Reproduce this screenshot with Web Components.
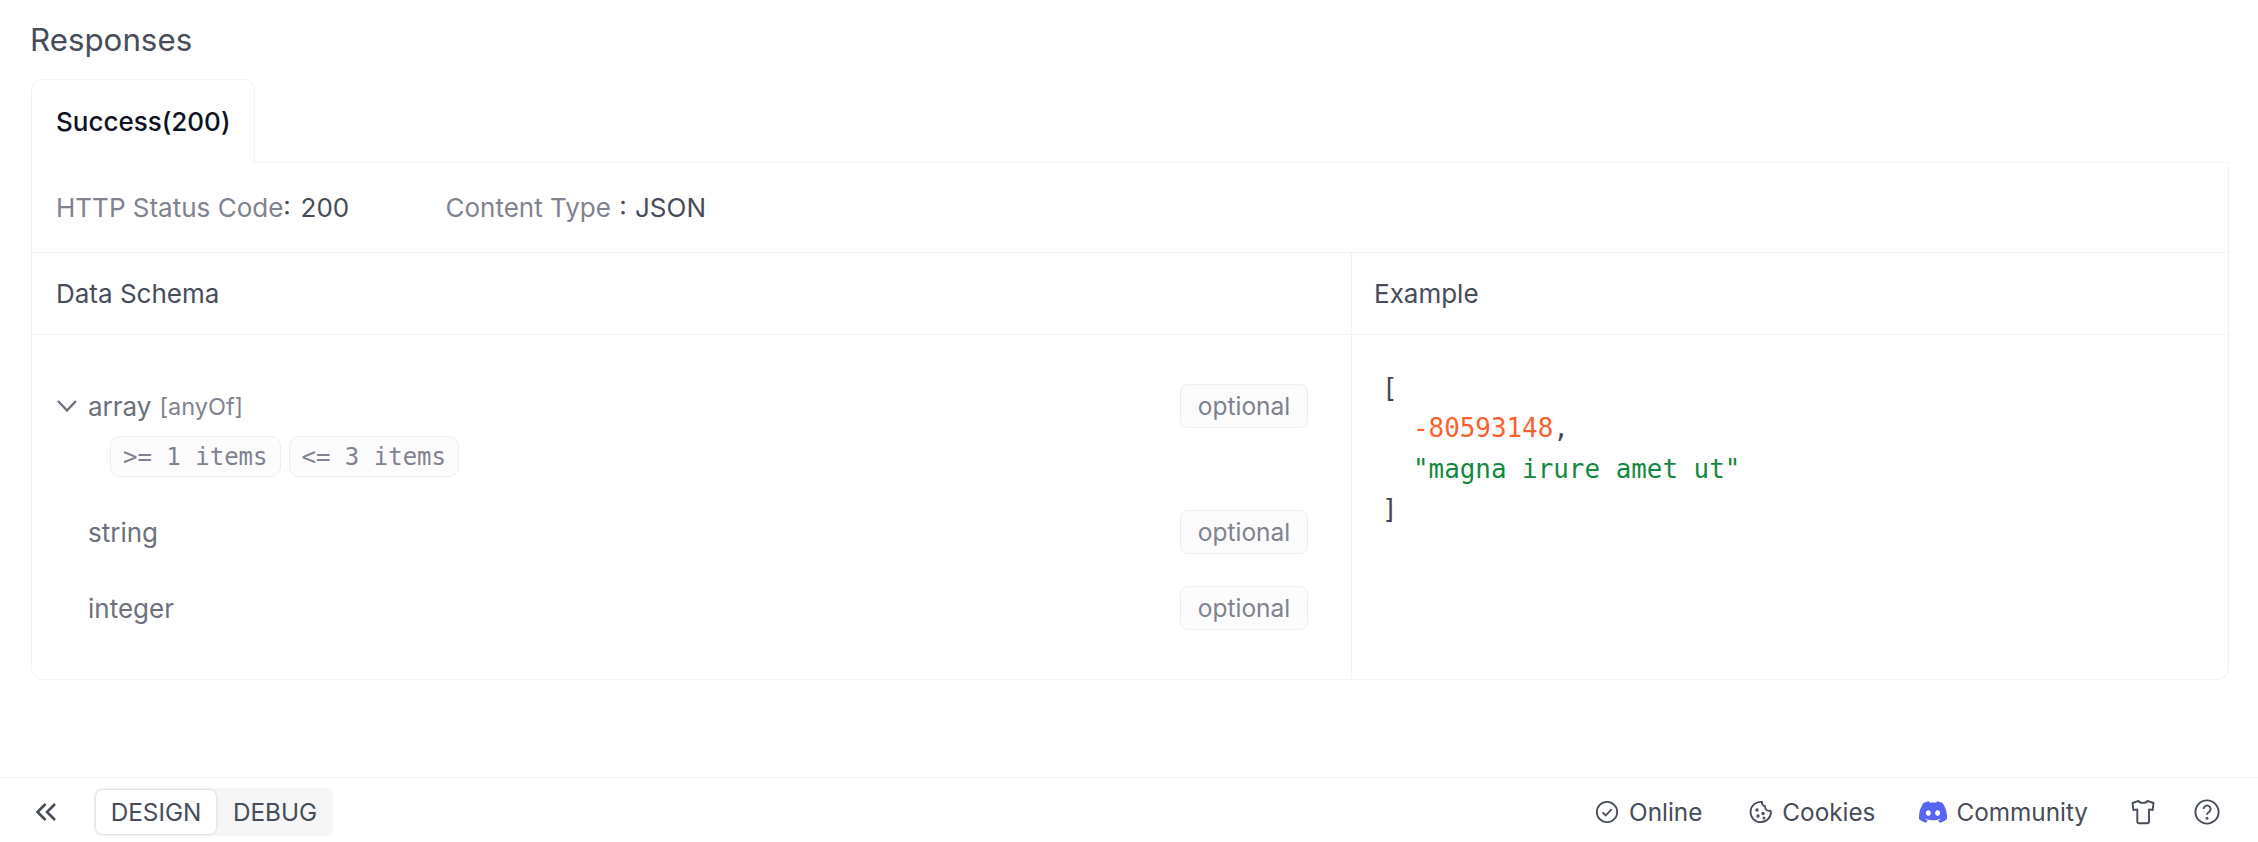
<!DOCTYPE html>
<html>
<head>
<meta charset="utf-8">
<title>Responses</title>
<style>
  html, body { margin: 0; height: 100%; background: #fff; }
  body { font-family: Inter, "Liberation Sans", sans-serif; overflow: hidden; }
</style>
</head>
<body>
<api-page>
  <api-responses title-text="Responses" tab="Success(200)">
    <schema-row slot="schema" name="array" extra="[anyOf]" expandable>
      <mono-tag>&gt;= 1 items</mono-tag>
      <mono-tag>&lt;= 3 items</mono-tag>
    </schema-row>
    <schema-row slot="schema" name="string"></schema-row>
    <schema-row slot="schema" name="integer"></schema-row>
    <json-example slot="example"></json-example>
  </api-responses>
  <status-bar slot="footer"></status-bar>
</api-page>

<script>
class ApiPage extends HTMLElement {
  constructor() {
    super();
    this.attachShadow({ mode: 'open' });
    this.shadowRoot.innerHTML = `
      <style>
        :host { display: flex; flex-direction: column; height: 842px; }
        main { flex: 1; min-height: 0; padding: 0 29px 0 31px; }
      </style>
      <main><slot></slot></main>
      <slot name="footer"></slot>
    `;
  }
}
customElements.define('api-page', ApiPage);

class ApiResponses extends HTMLElement {
  constructor() {
    super();
    this.attachShadow({ mode: 'open' });
  }
  connectedCallback() {
    const line = '1.5px solid #f3f3f7';
    this.shadowRoot.innerHTML = `
      <style>
        :host { display: block; color: #464c58; }
        h2 { margin: 0 0 0 -1px; height: 79px; box-sizing: border-box; padding-top: 21px; font-size: 31.3px; line-height: 38px; font-weight: 400; }
        .tabs { display: flex; height: 84px; }
        .tab {
          width: 224px; box-sizing: border-box; padding-left: 24px;
          display: flex; align-items: center;
          font-size: 26px; font-weight: 500; color: #0d1322;
          border: ${line}; border-bottom: 0; border-radius: 12px 12px 0 0;
        }
        .fill { flex: 1; border-bottom: ${line}; }
        .card { border: ${line}; border-top: 0; border-radius: 0 0 12px 12px; height: 516px; display: flex; flex-direction: column; }
        .status { height: 90px; flex: none; box-sizing: border-box; padding-left: 24px; display: flex; align-items: center; font-size: 26px; border-bottom: ${line}; }
        .status span { color: #80838f; }
        .status b { font-weight: 400; color: #464c58; white-space: pre; word-spacing: 2.5px; }
        .status div:first-child { width: 389.5px; }
        .status div:last-child b { word-spacing: 1px; }
        .cols { flex: 1; min-height: 0; display: grid; grid-template-columns: 1319px 1fr; }
        .col { display: flex; flex-direction: column; min-width: 0; }
        .col + .col { border-left: ${line}; }
        .head { height: 82px; flex: none; box-sizing: border-box; display: flex; align-items: center; font-size: 26px; border-bottom: ${line}; }
        .left .head { padding-left: 24px; }
        .right .head { padding-left: 22px; }
        .schema { padding: 49px 43px 0 25px; display: flex; flex-direction: column; gap: 32px; }
        .example { padding: 33px 0 0 30px; }
      </style>
      <h2>${this.getAttribute('title-text')}</h2>
      <div class="tabs"><div class="tab">${this.getAttribute('tab')}</div><div class="fill"></div></div>
      <div class="card">
        <div class="status">
          <div><span>HTTP Status Code</span><b>: 200</b></div>
          <div><span>Content Type</span><b> : JSON</b></div>
        </div>
        <div class="cols">
          <div class="col left">
            <div class="head">Data Schema</div>
            <div class="schema"><slot name="schema"></slot></div>
          </div>
          <div class="col right">
            <div class="head">Example</div>
            <div class="example"><slot name="example"></slot></div>
          </div>
        </div>
      </div>
    `;
  }
}
customElements.define('api-responses', ApiResponses);

class SchemaRow extends HTMLElement {
  constructor() {
    super();
    this.attachShadow({ mode: 'open' });
  }
  connectedCallback() {
    const name = this.getAttribute('name');
    const extra = this.getAttribute('extra');
    const chevron = this.hasAttribute('expandable')
      ? `<svg viewBox="0 0 20 12" width="20" height="12" fill="none" stroke="#6c707c" stroke-width="2.3"><path d="M1 1l9 9.5L19 1"/></svg>`
      : '';
    this.shadowRoot.innerHTML = `
      <style>
        :host { display: block; }
        .top { display: flex; align-items: center; height: 44px; }
        .icon { width: 31px; flex: none; display: flex; }
        .name { font-size: 26px; color: #6c707c; }
        .extra { font-size: 23.5px; color: #80838f; margin-left: 8px; }
        .badge {
          margin-left: auto; height: 44px; width: 128px; box-sizing: border-box;
          display: flex; align-items: center; justify-content: center;
          font-size: 24.5px; color: #80838f; background: #fcfcfd;
          border: 1.5px solid #eeeeef; border-radius: 8px;
        }
        .tags { display: flex; gap: 8px; padding: 8px 0 1px 53px; }
      </style>
      <div class="top">
        <div class="icon">${chevron}</div>
        <span class="name">${name}</span>
        ${extra ? `<span class="extra">${extra}</span>` : ''}
        <span class="badge">optional</span>
      </div>
      ${this.children.length ? '<div class="tags"><slot></slot></div>' : ''}
    `;
  }
}
customElements.define('schema-row', SchemaRow);

class MonoTag extends HTMLElement {
  constructor() {
    super();
    this.attachShadow({ mode: 'open' });
    this.shadowRoot.innerHTML = `
      <style>
        :host {
          display: inline-flex; align-items: center; height: 41px; box-sizing: border-box;
          padding: 1px 12px 0; font: 24px "DejaVu Sans Mono", monospace; color: #80838f;
          background: #fcfcfd; border: 1.5px solid #eeeeef; border-radius: 10px;
        }
      </style>
      <slot></slot>
    `;
  }
}
customElements.define('mono-tag', MonoTag);

class JsonExample extends HTMLElement {
  constructor() {
    super();
    this.attachShadow({ mode: 'open' });
    this.shadowRoot.innerHTML = `<style>
        :host { display: block; font: 25.9px/40.4px "DejaVu Sans Mono", monospace; color: #3f4653; }
        .num { color: #ff5f2e; }
        .str { color: #14883e; }
        .in { padding-left: 31px; }
      </style>
      <div>[</div>
      <div class="in"><span class="num">-80593148</span>,</div>
      <div class="in"><span class="str">"magna irure amet ut"</span></div>
      <div>]</div>
    `;
  }
}
customElements.define('json-example', JsonExample);

class StatusBar extends HTMLElement {
  constructor() {
    super();
    this.attachShadow({ mode: 'open' });
    this.shadowRoot.innerHTML = `
      <style>
        :host {
          display: flex; align-items: center; height: 65px; box-sizing: border-box;
          border-top: 1.5px solid #f3f3f5; padding: 4px 38px 0 35px;
          font-size: 24.3px; color: #464c58;
        }
        .back { width: 59px; display: flex; }
        .seg { display: flex; height: 48px; box-sizing: border-box; padding: 2px; width: 239px; background: #f6f6f7; border-radius: 8px; }
        .seg div { display: flex; align-items: center; justify-content: center; }
        .on { width: 120px; background: #fff; border-radius: 7px; box-shadow: 0 0 3px rgba(40,40,70,.22); }
        .off { flex: 1; padding-left: 3px; }
        .right { margin-left: auto; display: flex; align-items: center; }
        .item { display: flex; align-items: center; gap: 9px; }
        svg { display: block; flex: none; }
      </style>
      <div class="back">
        <svg width="22" height="18" viewBox="0 0 22 18" fill="none" stroke="#464c58" stroke-width="2.6"><path d="M10.5 1L2.5 9l8 8"/><path d="M20 1l-8 8 8 8"/></svg>
      </div>
      <div class="seg"><div class="on">DESIGN</div><div class="off">DEBUG</div></div>
      <div class="right">
        <div class="item" style="gap:10px">
          <svg width="24" height="24" viewBox="0 0 24 24" fill="none" stroke="#464c58" stroke-width="1.8"><circle cx="12" cy="12" r="10.2"/><path d="M7.5 12.3l3.2 3.2 6-6.4"/></svg>
          <span>Online</span>
        </div>
        <div class="item" style="margin-left:47px">
          <svg width="24" height="24" viewBox="0 0 24 24" fill="none" stroke="#464c58" stroke-width="1.8"><path d="M13 1.9a3.6 3.6 0 0 0 3 4.3 3.9 3.9 0 0 0 4.6 4.5c.6 0 1 .2 1.3.6A10.2 10.2 0 1 1 13 1.9z"/><circle cx="8" cy="10" r=".8"/><circle cx="14" cy="13.5" r=".8"/><circle cx="9" cy="16" r=".8"/><circle cx="15" cy="18" r=".6"/></svg>
          <span>Cookies</span>
        </div>
        <div class="item" style="margin-left:44px">
          <svg width="28" height="28" viewBox="0 0 24 24" fill="#5865f2"><path d="M20.317 4.3698a19.7913 19.7913 0 00-4.8851-1.5152.0741.0741 0 00-.0785.0371c-.211.3753-.4447.8648-.6083 1.2495-1.8447-.2762-3.68-.2762-5.4868 0-.1636-.3933-.4058-.8742-.6177-1.2495a.077.077 0 00-.0785-.037 19.7363 19.7363 0 00-4.8852 1.515.0699.0699 0 00-.0321.0277C.5334 9.0458-.319 13.5799.0992 18.0578a.0824.0824 0 00.0312.0561c2.0528 1.5076 4.0413 2.4228 5.9929 3.0294a.0777.0777 0 00.0842-.0276c.4616-.6304.8731-1.2952 1.226-1.9942a.076.076 0 00-.0416-.1057c-.6528-.2476-1.2743-.5495-1.8722-.8923a.077.077 0 01-.0076-.1277c.1258-.0943.2517-.1923.3718-.2914a.0743.0743 0 01.0776-.0105c3.9278 1.7933 8.18 1.7933 12.0614 0a.0739.0739 0 01.0785.0095c.1202.099.246.1981.3728.2924a.077.077 0 01-.0066.1276 12.2986 12.2986 0 01-1.873.8914.0766.0766 0 00-.0407.1067c.3604.698.7719 1.3628 1.225 1.9932a.076.076 0 00.0842.0286c1.961-.6067 3.9495-1.5219 6.0023-3.0294a.077.077 0 00.0313-.0552c.5004-5.177-.8382-9.6739-3.5485-13.6604a.061.061 0 00-.0312-.0286zM8.02 15.3312c-1.1825 0-2.1569-1.0857-2.1569-2.419 0-1.3332.9555-2.4189 2.157-2.4189 1.2108 0 2.1757 1.0952 2.1568 2.419 0 1.3332-.9555 2.4189-2.1569 2.4189zm7.9748 0c-1.1825 0-2.1569-1.0857-2.1569-2.419 0-1.3332.9554-2.4189 2.1569-2.4189 1.2108 0 2.1757 1.0952 2.1568 2.419 0 1.3332-.946 2.4189-2.1568 2.4189Z"/></svg>
          <span>Community</span>
        </div>
        <svg style="margin-left:43px" width="24" height="26" viewBox="0 0 24 26" fill="none" stroke="#464c58" stroke-width="1.9" stroke-linejoin="round"><path d="M7.5 1.8C8.5 4.5 15.5 4.5 16.5 1.8L22.5 4l-.8 7-3.7-.6V22.5a1.7 1.7 0 0 1-1.7 1.7H8a1.7 1.7 0 0 1-1.7-1.7V10.4l-3.9.6L1.5 4z"/></svg>
        <svg style="margin-left:39px" width="26" height="26" viewBox="0 0 26 26" fill="none" stroke="#464c58" stroke-width="1.9"><circle cx="13" cy="13" r="11.6"/><path d="M9.6 10a3.5 3.5 0 1 1 5.4 3c-1.3.8-2 1.4-2 2.8"/><circle cx="13" cy="19.3" r=".6"/></svg>
      </div>
    `;
  }
}
customElements.define('status-bar', StatusBar);
</script>
</body>
</html>
